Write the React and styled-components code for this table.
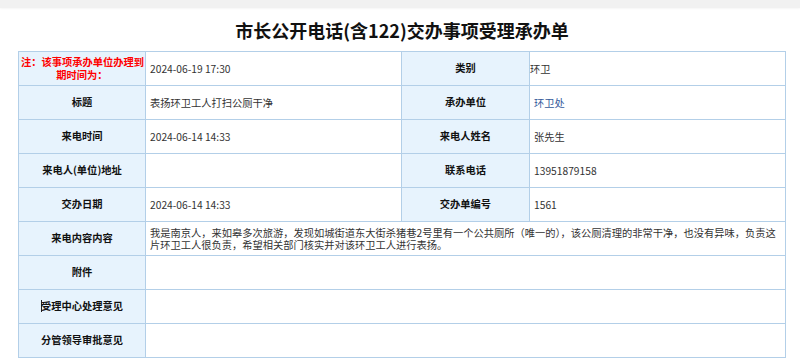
import React from "react";
import styled, { createGlobalStyle } from "styled-components";

const GlobalStyle = createGlobalStyle`
  html, body {
    margin: 0;
    padding: 0;
    background: #fff;
  }
  body {
    font-family: "Noto Sans CJK SC", "Noto Sans", sans-serif;
    color: #333;
  }
`;

const rows = [
  { label: "标题", value: "表扬环卫工人打扫公厕干净", label2: "承办单位", value2: "环卫处", link2: true },
  { label: "来电时间", value: "2024-06-14 14:33", label2: "来电人姓名", value2: "张先生" },
  { label: "来电人(单位)地址", value: "", label2: "联系电话", value2: "13951879158" },
  { label: "交办日期", value: "2024-06-14 14:33", label2: "交办单编号", value2: "1561" },
];

const App = () => {
  return (
    <>
      <GlobalStyle />
      <TopBar />
      <Page>
        <Title>市长公开电话(含122)交办事项受理承办单</Title>
        <Table>
          <colgroup>
            <col style={{ width: 127 }} />
            <col style={{ width: 256 }} />
            <col style={{ width: 128 }} />
            <col />
          </colgroup>
          <tbody>
            <tr>
              <Label $warn>
                注：该事项承办单位办理到
                <br />
                期时间为：
              </Label>
              <Value>2024-06-19 17:30</Value>
              <Label>类别</Label>
              <Value $flush>环卫</Value>
            </tr>
            {rows.map((r) => (
              <tr key={r.label}>
                <Label>{r.label}</Label>
                <Value>{r.value}</Value>
                <Label>{r.label2}</Label>
                <Value $link={r.link2}>{r.value2}</Value>
              </tr>
            ))}
            <tr>
              <Label>来电内容内容</Label>
              <Value colSpan={3}>
                我是南京人，来如皋多次旅游，发现如城街道东大街杀猪巷2号里有一个公共厕所（唯一的），该公厕清理的非常干净，也没有异味，负责这
                <br />
                片环卫工人很负责，希望相关部门核实并对该环卫工人进行表扬。
              </Value>
            </tr>
            <tr>
              <Label>附件</Label>
              <Value colSpan={3} />
            </tr>
            <tr>
              <Label>
                <Caret />受理中心处理意见
              </Label>
              <Value colSpan={3} />
            </tr>
            <tr>
              <Label>分管领导审批意见</Label>
              <Value colSpan={3} />
            </tr>
          </tbody>
        </Table>
      </Page>
    </>
  );
};

export default App;

const TopBar = styled.div`
  height: 8px;
  background: #f1f1f1;
  box-shadow: 0 1px 2px rgba(0, 0, 0, 0.04);
`;

const Page = styled.div`
  width: 768px;
  margin-left: 18px;
`;

const Title = styled.h1`
  margin: 0;
  height: 43px;
  line-height: 45px;
  text-align: center;
  font-size: 18px;
  font-weight: 700;
  color: #111;
`;

const Table = styled.table`
  width: 768px;
  table-layout: fixed;
  border-collapse: collapse;
  border: 1px solid #b7d2ea;
`;

const Label = styled.th`
  height: 33px;
  padding: 0 2px;
  background: #e7f3fd;
  border: 1px solid #b3cfe8;
  font-size: 10.25px;
  line-height: 12.5px;
  font-weight: 700;
  text-align: center;
  color: ${(p) => (p.$warn ? "#f00" : "#111")};
  white-space: nowrap;
`;

const Value = styled.td`
  height: 33px;
  padding: 0 ${(p) => (p.$flush ? "0" : "4px")};
  border: 1px solid #b3cfe8;
  font-size: 10.25px;
  line-height: 12px;
  color: ${(p) => (p.$link ? "#34599a" : "#333")};
  background: #fff;
  white-space: nowrap;
`;

const Caret = styled.span`
  display: inline-block;
  width: 1px;
  height: 12px;
  margin-right: -1px;
  background: #222;
  vertical-align: -2px;
`;
